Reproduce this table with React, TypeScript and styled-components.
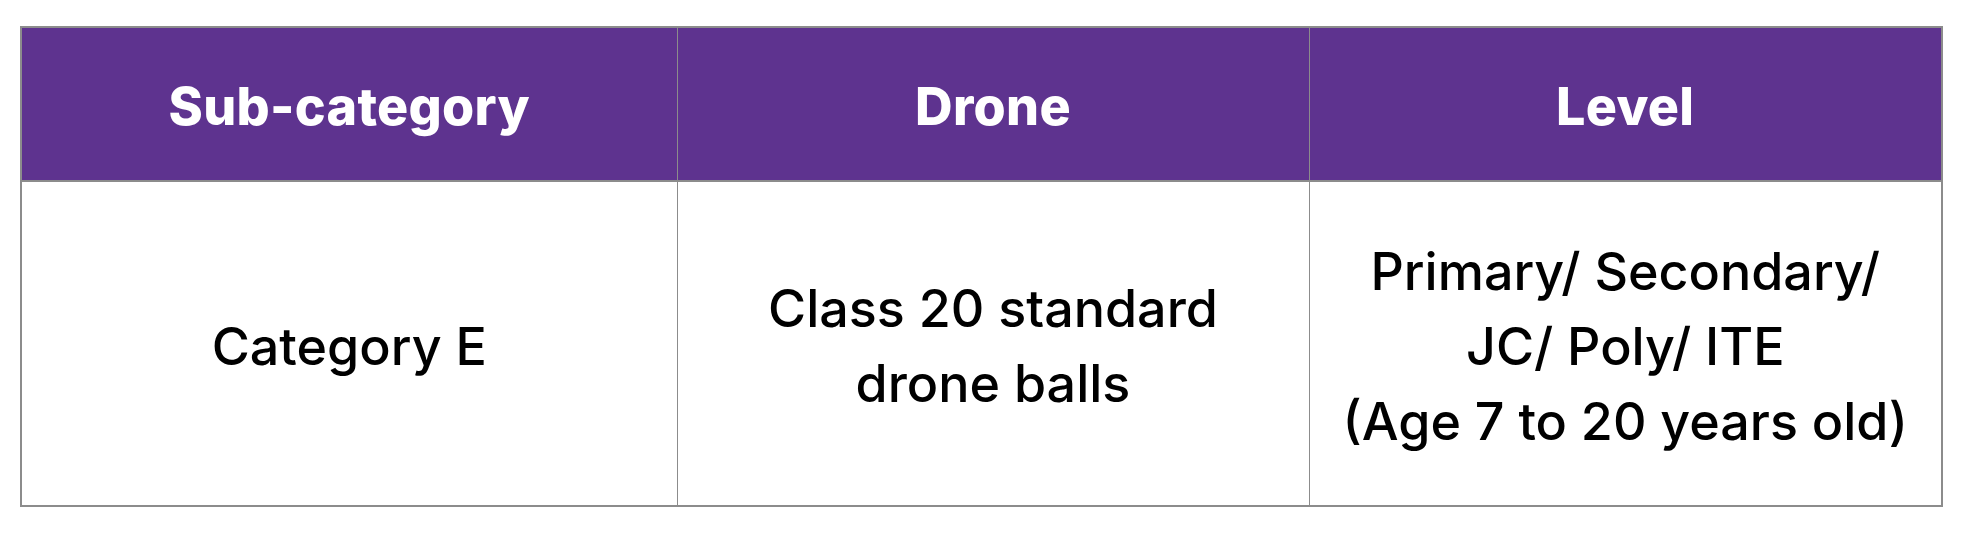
import React from 'react';
import styled, { createGlobalStyle } from 'styled-components';

const GlobalStyle = createGlobalStyle`
  html, body {
    margin: 0;
    padding: 0;
    background: #ffffff;
  }
  body {
    font-family: Inter, "Noto Sans", "DejaVu Sans", sans-serif;
  }
`;

const Page = styled.div`
  padding: 26px 29px 0 20px;
`;

const Table = styled.table`
  width: 1921px;
  border-collapse: collapse;
  table-layout: fixed;
  border: 2px solid #8c8c8c;
`;

const Col = styled.col<{ $width: number }>`
  width: ${p => p.$width}px;
`;

const HeadCell = styled.th`
  height: 148px;
  padding: 4px 16px 0;
  background: #5e338f;
  color: #ffffff;
  font-size: 52px;
  font-weight: 800;
  letter-spacing: 0.3px;
  text-align: center;
  vertical-align: middle;
  border: 1px solid #8c8c8c;
  border-bottom-width: 2px;
`;

const BodyCell = styled.td`
  height: 318px;
  padding: 5px 16px 0;
  color: #000000;
  font-size: 52px;
  font-weight: 500;
  line-height: 75px;
  text-align: center;
  vertical-align: middle;
  border: 1px solid #8c8c8c;
`;

const columns = [
  { head: 'Sub-category', width: 656, body: ['Category E'] },
  { head: 'Drone', width: 632, body: ['Class 20 standard', 'drone balls'] },
  {
    head: 'Level',
    width: 633,
    body: ['Primary/ Secondary/', 'JC/ Poly/ ITE', '(Age 7 to 20 years old)'],
  },
];

const App = () => {
  return (
    <>
      <GlobalStyle />
      <Page>
        <Table>
          <colgroup>
            {columns.map(c => (
              <Col key={c.head} $width={c.width} />
            ))}
          </colgroup>
          <thead>
            <tr>
              {columns.map(c => (
                <HeadCell key={c.head}>{c.head}</HeadCell>
              ))}
            </tr>
          </thead>
          <tbody>
            <tr>
              {columns.map(c => (
                <BodyCell key={c.head}>
                  {c.body.map((line, i) => (
                    <React.Fragment key={line}>
                      {i > 0 && <br />}
                      {line}
                    </React.Fragment>
                  ))}
                </BodyCell>
              ))}
            </tr>
          </tbody>
        </Table>
      </Page>
    </>
  );
};

export default App;
